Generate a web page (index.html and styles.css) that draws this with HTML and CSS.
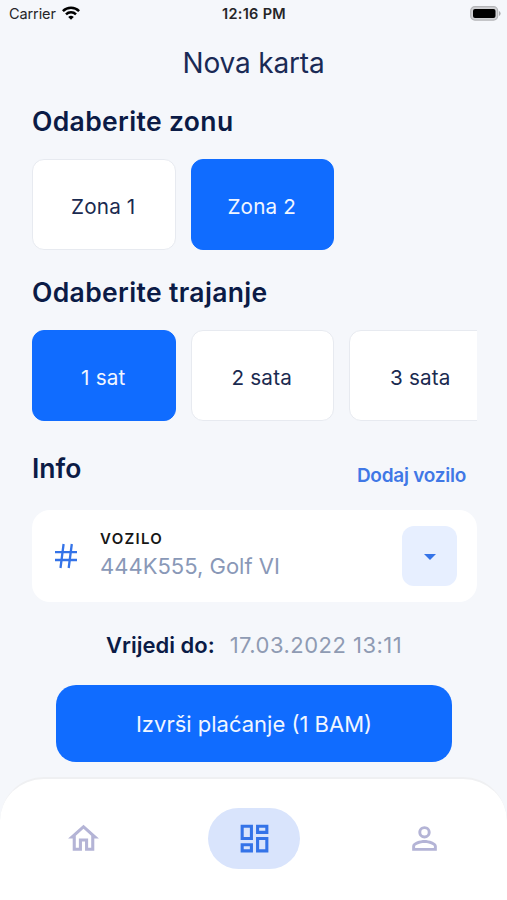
FILE: index.html
```html
<!DOCTYPE html>
<html lang="bs">
<head>
<meta charset="utf-8">
<title>Nova karta</title>
<link rel="stylesheet" href="styles.css">
</head>
<body>
<div class="screen">
  <div class="status">
    <div class="carrier"><span>Carrier</span>
      <svg class="wifi" viewBox="0 0 18 14"><g fill="none" stroke="#000" stroke-width="2.5"><path d="M.9 5.1a11.5 11.5 0 0 1 16.2 0"/><path d="M4 8.3a7.1 7.1 0 0 1 10 0"/></g><path d="M9 13.8 6.2 11a4 4 0 0 1 5.6 0z"/></svg>
    </div>
    <div class="time">12:16 PM</div>
    <div class="power"><svg class="battery" viewBox="0 0 31 15"><rect x=".7" y=".7" width="27" height="13.4" rx="4.2" fill="#d0d1d4" stroke="#b4b5b8" stroke-width="1.2"/><rect x="3" y="3" width="22.5" height="9" rx="2"/><path d="M29 5v5q1.600-.8 1.600-2.500T29 5z" fill="#a9aaad"/></svg></div>
  </div>
  <h1 class="title">Nova karta</h1>
  <main class="content">
    <h2 class="heading zone-heading">Odaberite zonu</h2>
    <div class="options">
      <button class="option">Zona 1</button>
      <button class="option active">Zona 2</button>
    </div>
    <h2 class="heading">Odaberite trajanje</h2>
    <div class="options">
      <button class="option active">1 sat</button>
      <button class="option">2 sata</button>
      <button class="option">3 sata</button>
    </div>
    <div class="info-row">
      <h2 class="heading info">Info</h2>
      <a class="add">Dodaj vozilo</a>
    </div>
    <div class="vehicle">
      <svg class="hash" viewBox="0 0 24 26" fill="none" stroke="#3473e8" stroke-width="2.300"><path d="M1 9.200h22M1 17h22M9.600 1 6.500 25M17.800 1l-3.100 24"/></svg>
      <div class="details">
        <div class="label">VOZILO</div>
        <div class="plate">444K555, Golf VI</div>
      </div>
      <button class="dropdown" aria-label="VOZILO"><svg viewBox="0 0 12 6"><path d="M0 0h12L6 6z" fill="#3473e8"/></svg></button>
    </div>
    <div class="valid"><span class="valid-label">Vrijedi do:</span><span class="date">17.03.2022 13:11</span></div>
    <button class="pay">Izvrši plaćanje (1 BAM)</button>
  </main>
  <nav class="tabs">
    <div class="tab"><svg viewBox="0 0 24 24"><path d="m12 5.690 5 4.500V18h-2v-6H9v6H7v-7.810l5-4.500M12 3 2 12h3v8h6v-6h2v6h6v-8h3L12 3z"/></svg></div>
    <div class="tab selected"><svg viewBox="0 0 24 24"><path d="M19 5v2h-4V5h4M9 5v6H5V5h4m10 8v6h-4v-6h4M9 17v2H5v-2h4M21 3h-8v6h8V3zM11 3H3v10h8V3zm10 8h-8v10h8V11zm-10 4H3v6h8v-6z"/></svg></div>
    <div class="tab"><svg viewBox="0 0 24 24"><path d="M12 5.900a2.100 2.100 0 1 1 0 4.200 2.100 2.100 0 0 1 0-4.200m0 9c2.970 0 6.100 1.460 6.100 2.100v1.100H5.900V17c0-.640 3.130-2.100 6.100-2.100M12 4C9.790 4 8 5.790 8 8s1.790 4 4 4 4-1.790 4-4-1.790-4-4-4zm0 9c-2.670 0-8 1.340-8 4v3h16v-3c0-2.660-5.330-4-8-4z"/></svg></div>
  </nav>
</div>
</body>
</html>
```
FILE: styles.css
```css
* { box-sizing: border-box; }
body { margin: 0; background: #f5f7fb; font-family: Inter, "Liberation Sans", sans-serif; color: #0b1b46; }
.screen { width: 507px; height: 900px; display: flex; flex-direction: column; overflow: hidden; }
button { font: inherit; border: 0; padding: 0; margin: 0; color: inherit; }
h1, h2 { margin: 0; }
.status { height: 28px; display: grid; grid-template-columns: 1fr auto 1fr; align-items: center; padding: 0 6px 0 9px; color: #252528; font-size: 14.5px; }
.carrier { display: flex; align-items: center; gap: 6px; margin-top: -1px; letter-spacing: -.1px; }
.wifi { width: 18px; height: 14px; margin-top: -1px; }
.time { font-weight: 600; font-size: 14.5px; letter-spacing: .3px; margin: -1px 2px 0 0; }
.power { display: flex; justify-content: flex-end; }
.battery { width: 31px; height: 15px; margin-top: -2px; }
.title { height: 70px; line-height: 70px; font-size: 28px; font-weight: 400; letter-spacing: -.15px; text-align: center; color: #1a2a55; }
.content { padding: 0 30px 0 32px; }
.heading { height: 80px; line-height: 85px; font-size: 26.5px; font-weight: 600; letter-spacing: .35px; white-space: nowrap; }
.zone-heading { height: 61px; line-height: 47px; }
.options { display: flex; gap: 15px; height: 91px; overflow: hidden; }
.option { flex: 0 0 143.5px; height: 91px; border: 1px solid #e7eaf0; border-radius: 12px; background: #fff; font-size: 20.7px; padding: 3px 1px 0 0; letter-spacing: .15px; color: #1a2a50; }
.option.active { background: #106cff; border-color: #106cff; color: #f1f6ff; }
.info-row { display: flex; justify-content: space-between; height: 89px; padding-right: 11px; }
.heading.info { line-height: 95px; letter-spacing: 0; }
.add { color: #4078e6; font-size: 19px; font-weight: 600; letter-spacing: -.25px; line-height: 110px; }
.vehicle { height: 92px; border-radius: 18px; background: #fff; display: flex; align-items: center; padding: 0 20px 0 22px; }
.hash { width: 24px; height: 26px; }
.details { flex: 1; padding-left: 22px; margin-top: -2px; white-space: nowrap; }
.label { font-size: 15px; font-weight: 600; line-height: 22px; letter-spacing: 1.3px; color: #171717; }
.plate { font-size: 22px; line-height: 32px; color: #8998b7; }
.dropdown { width: 55px; height: 60px; border-radius: 12px; background: #e7efff; display: flex; align-items: center; justify-content: center; }
.dropdown svg { width: 12px; height: 6px; margin-top: 1px; }
.valid { height: 83px; line-height: 87px; display: flex; gap: 15px; padding-left: 74px; font-size: 22px; white-space: nowrap; }
.valid-label { font-weight: 600; }
.date { color: #8f9bb3; letter-spacing: .48px; }
.pay { display: block; width: 396px; height: 77px; margin-left: 24px; border-radius: 20px; background: #106cff; color: #f1f6ff; font-size: 22px; }
.tabs { height: 123px; margin-top: 15px; flex: none; background: #fff; border-top: 2px solid #eff0f2; border-radius: 44px 44px 0 0; display: grid; grid-template-columns: 167px 1fr 166px; justify-items: center; padding-top: 29px; }
.tab { width: 92px; height: 61px; display: flex; align-items: center; justify-content: center; fill: #b4b4d6; }
.tab svg { width: 37px; height: 37px; }
.tab.selected { background: #d9e4fc; border-radius: 31px; fill: #3473e8; }
```
